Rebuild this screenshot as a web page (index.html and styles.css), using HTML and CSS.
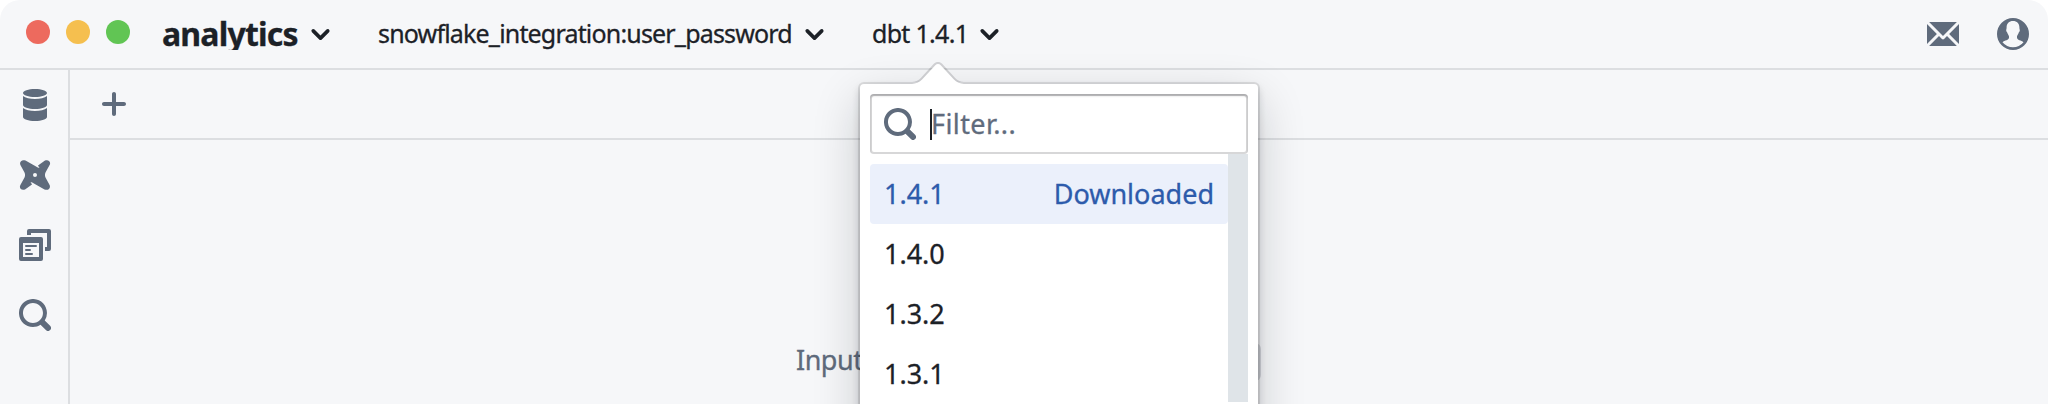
FILE: index.html
```html
<!DOCTYPE html>
<html lang="en">
<head>
<meta charset="utf-8">
<title>analytics</title>
<link rel="stylesheet" href="styles.css">
</head>
<body>
<div class="screen">
<svg class="defs" width="0" height="0">
  <symbol id="chevron" viewBox="0 0 16 16"><path d="M12 5c-.28 0-.53.11-.71.29L8 8.59l-3.29-3.3a1.003 1.003 0 00-1.42 1.42l4 4c.18.18.43.29.71.29s.53-.11.71-.29l4-4A1.003 1.003 0 0012 5z"/></symbol>
  <symbol id="search" viewBox="0 0 16 16"><path d="M15.55 13.43l-2.67-2.68a6.94 6.94 0 001.11-3.76c0-3.87-3.13-7-7-7s-7 3.13-7 7 3.13 7 7 7c1.39 0 2.68-.42 3.76-1.11l2.68 2.67a1.498 1.498 0 102.12-2.12zm-8.56-1.44c-2.76 0-5-2.24-5-5s2.24-5 5-5 5 2.24 5 5-2.24 5-5 5z"/></symbol>
</svg>
<div class="window">
  <header class="titlebar">
    <div class="lights"><i class="light red"></i><i class="light yellow"></i><i class="light green"></i></div>
    <div class="menu project"><span class="label">analytics</span><svg class="chev"><use href="#chevron"/></svg></div>
    <div class="menu profile"><span class="label">snowflake_integration:user_password</span><svg class="chev"><use href="#chevron"/></svg></div>
    <div class="menu version"><span class="label">dbt 1.4.1</span><svg class="chev"><use href="#chevron"/></svg></div>
    <div class="actions">
      <svg class="icon" viewBox="0 0 16 16"><path d="M0 3.06v9.88L4.94 8 0 3.06zM14.94 2H1.06L8 8.94 14.94 2zm-6.41 8.53c-.14.14-.32.22-.53.22s-.39-.08-.53-.22l-1.47-1.47L1.06 14h13.88L10 9.06l-1.47 1.47zM11.06 8L16 12.94V3.06L11.06 8z"/></svg>
      <svg class="icon" viewBox="0 0 32 32"><path fill-rule="evenodd" d="M16 0a16 16 0 1 0 0 32a16 16 0 0 0 0-32zM16 3c4 0 6.400 2.500 6.400 6.500c0 1.500.400 1.600.400 3c0 1.300-.900 1.500-1.200 2.500c-.400 1.600-1.700 2.600-1.700 4c0 3.600 4.600 3 6.600 5.300a13.500 13.500 0 0 1-21 0c2-2.300 6.600-1.700 6.600-5.300c0-1.400-1.300-2.400-1.700-4c-.300-1-1.200-1.200-1.200-2.500c0-1.400.400-1.500.400-3c0-4 2.400-6.500 6.400-6.500z"/></svg>
    </div>
  </header>
  <div class="body">
    <nav class="sidebar">
      <svg class="icon" viewBox="0 0 16 16"><path d="M8 4c3.310 0 6-.900 6-2s-2.690-2-6-2C4.680 0 2 .900 2 2s2.680 2 6 2zm-6-.520V8c0 1.100 2.690 2 6 2s6-.900 6-2V3.480C12.780 4.400 10.560 5 8 5s-4.780-.600-6-1.520zm0 6V14c0 1.100 2.690 2 6 2s6-.900 6-2V9.480c-1.220.920-3.440 1.520-6 1.520s-4.780-.600-6-1.520z"/></svg>
      <svg class="icon" viewBox="0 0 32 32"><path fill-rule="evenodd" d="M6.500 1.600L18.800 8.600L20.500 9L19 6.500L26 1.600C29.400 0 32.300 3 30.600 6L26.500 13.500Q25.400 16 26.500 18.500L30.600 26C32 29.300 29 32 25.500 30.400L13.200 23.400L11.500 23L13 25.500L6 30.400C2.600 32 -.300 29 1.400 26L5.500 18.500Q6.600 16 5.500 13.500L1.400 6C0 2.700 3 0 6.500 1.600zM16 14a2 2 0 1 0 0 4a2 2 0 0 0 0-4z"/></svg>
      <svg class="icon" viewBox="0 0 32 32"><path fill-rule="evenodd" d="M10 0H30a2 2 0 0 1 2 2V20a2 2 0 0 1-2 2H26V18H28V4H12V6H8V2a2 2 0 0 1 2-2zM2 8H22a2 2 0 0 1 2 2V30a2 2 0 0 1-2 2H2a2 2 0 0 1-2-2V10a2 2 0 0 1 2-2zM4 14V28H20V14z"/><path d="M7 16H17a1 1 0 0 1 0 2H7a1 1 0 0 1 0-2zM7 20H11a1 1 0 0 1 0 2H7a1 1 0 0 1 0-2zM7 24H13a1 1 0 0 1 0 2H7a1 1 0 0 1 0-2z"/></svg>
      <svg class="icon"><use href="#search"/></svg>
    </nav>
    <main class="main">
      <div class="tabs"><svg class="icon" viewBox="0 0 16 16"><path d="M13 7H9V3c0-.550-.450-1-1-1s-1 .450-1 1v4H3c-.550 0-1 .450-1 1s.450 1 1 1h4v4c0 .550.450 1 1 1s1-.450 1-1V9h4c.550 0 1-.450 1-1s-.450-1-1-1z"/></svg></div>
      <div class="empty"><span class="hint">Input</span><i class="key"></i></div>
    </main>
  </div>
</div>
<div class="popover">
  <svg class="arrow" viewBox="0 0 30 30"><path class="arrow-border" d="M8.110 6.302c1.015-.936 1.887-2.922 1.887-4.297v26c0-1.378-.868-3.357-1.888-4.297L.925 17.090c-1.237-1.140-1.233-3.034 0-4.170L8.110 6.302z"/><path class="arrow-fill" d="M8.787 7.036c1.220-1.125 2.210-3.376 2.210-5.030V0v30-2.005c0-1.654-.983-3.900-2.210-5.030l-7.183-6.616c-.810-.746-.802-1.960 0-2.700l7.183-6.614z"/></svg>
  <div class="filter"><svg class="icon"><use href="#search"/></svg><i class="caret"></i><span class="placeholder">Filter...</span></div>
  <div class="list">
    <ul class="items">
      <li class="item active"><span>1.4.1</span><span class="state">Downloaded</span></li>
      <li class="item"><span>1.4.0</span></li>
      <li class="item"><span>1.3.2</span></li>
      <li class="item"><span>1.3.1</span></li>
    </ul>
    <div class="track"></div>
  </div>
</div>
</div>
</body>
</html>
```
FILE: styles.css
```css
* { box-sizing: border-box; }
body { margin: 0; background: #fff; font-family: "Noto Sans", sans-serif; color: #1c2127; }
.screen { position: relative; height: 404px; overflow: hidden; }
.defs { position: absolute; }
svg { display: block; flex: none; }
.icon { width: 32px; height: 32px; fill: #5f6b7c; }
.window { height: 404px; display: flex; flex-direction: column; background: #f6f7f9; border-radius: 20px 20px 0 0; overflow: hidden; }
.titlebar { height: 70px; flex: none; display: flex; border-bottom: 2px solid #dcdee1; padding-left: 26px; }
.lights { display: flex; gap: 16px; padding-top: 20px; width: 136px; }
.light { width: 24px; height: 24px; border-radius: 50%; }
.red { background: #ed6a5e; }
.yellow { background: #f5bf4f; }
.green { background: #61c554; }
.menu { display: flex; align-items: center; height: 68px; white-space: nowrap; font-size: 25px; }
.menu .label { height: 34px; line-height: 32px; -webkit-text-stroke: .3px currentColor; }
.chev { width: 29px; height: 29px; fill: #1c2127; }
.project { width: 216px; font-weight: 700; font-size: 32px; }
.menu.project .label { width: 144px; letter-spacing: -.8px; height: 32px; line-height: 32px; overflow: hidden; }
.profile { width: 494px; }
.profile .label { width: 422px; letter-spacing: -.82px; }
.version .label { width: 103px; letter-spacing: -.7px; }
.actions { display: flex; gap: 38px; margin-left: auto; padding: 18px 19px 0 0; }
.body { flex: 1; min-height: 0; display: flex; }
.sidebar { width: 70px; border-right: 2px solid #dcdee1; padding: 19px 0 0 19px; display: flex; flex-direction: column; gap: 38px; }
.main { flex: 1; }
.tabs { height: 70px; border-bottom: 2px solid #dcdee1; padding: 18px 0 0 28px; }
.empty { display: flex; align-items: center; justify-content: space-between; width: 465px; margin: 202px 0 0 726px; height: 40px; font-size: 27px; color: #5f6b7c; }
.hint { padding-bottom: 5px; letter-spacing: -.5px; -webkit-text-stroke: .3px currentColor; }
.key { width: 60px; height: 38px; border-radius: 6px; background: #d3d5da; }
.popover { position: absolute; left: 860px; top: 84px; width: 398px; height: 400px; padding: 10px; background: #fff; border-radius: 4px; box-shadow: 0 0 0 2px rgba(17,20,24,.1), 0 4px 8px rgba(17,20,24,.2), 0 16px 48px rgba(17,20,24,.2); }
.arrow { position: absolute; left: 48px; top: -22px; width: 60px; height: 60px; transform: rotate(90deg); overflow: visible; }
.arrow-border { fill: #111418; fill-opacity: .16; }
.arrow-fill { fill: #fff; }
.filter { position: relative; display: flex; align-items: center; height: 60px; padding-left: 14px; border-radius: 4px; background: #fff; box-shadow: inset 0 0 0 2px rgba(17,20,24,.17), inset 0 2px 2px rgba(17,20,24,.22); }
.caret { width: 2px; height: 31px; margin: 0 -1px 0 14px; background: #1c2127; }
.placeholder { padding-bottom: 2px; font-size: 27px; letter-spacing: .4px; color: #5f6b7c; -webkit-text-stroke: .3px currentColor; }
.list { display: flex; height: 248px; }
.items { flex: 1; margin: 0; padding: 10px 0 0; list-style: none; }
.item { height: 60px; padding: 0 14px 2px; display: flex; align-items: center; justify-content: space-between; font-size: 27px; border-radius: 4px; -webkit-text-stroke: .3px currentColor; }
.active { background: #ebf0fb; color: #2d5bab; }
.track { width: 20px; background: #dfe4e8; }
```
